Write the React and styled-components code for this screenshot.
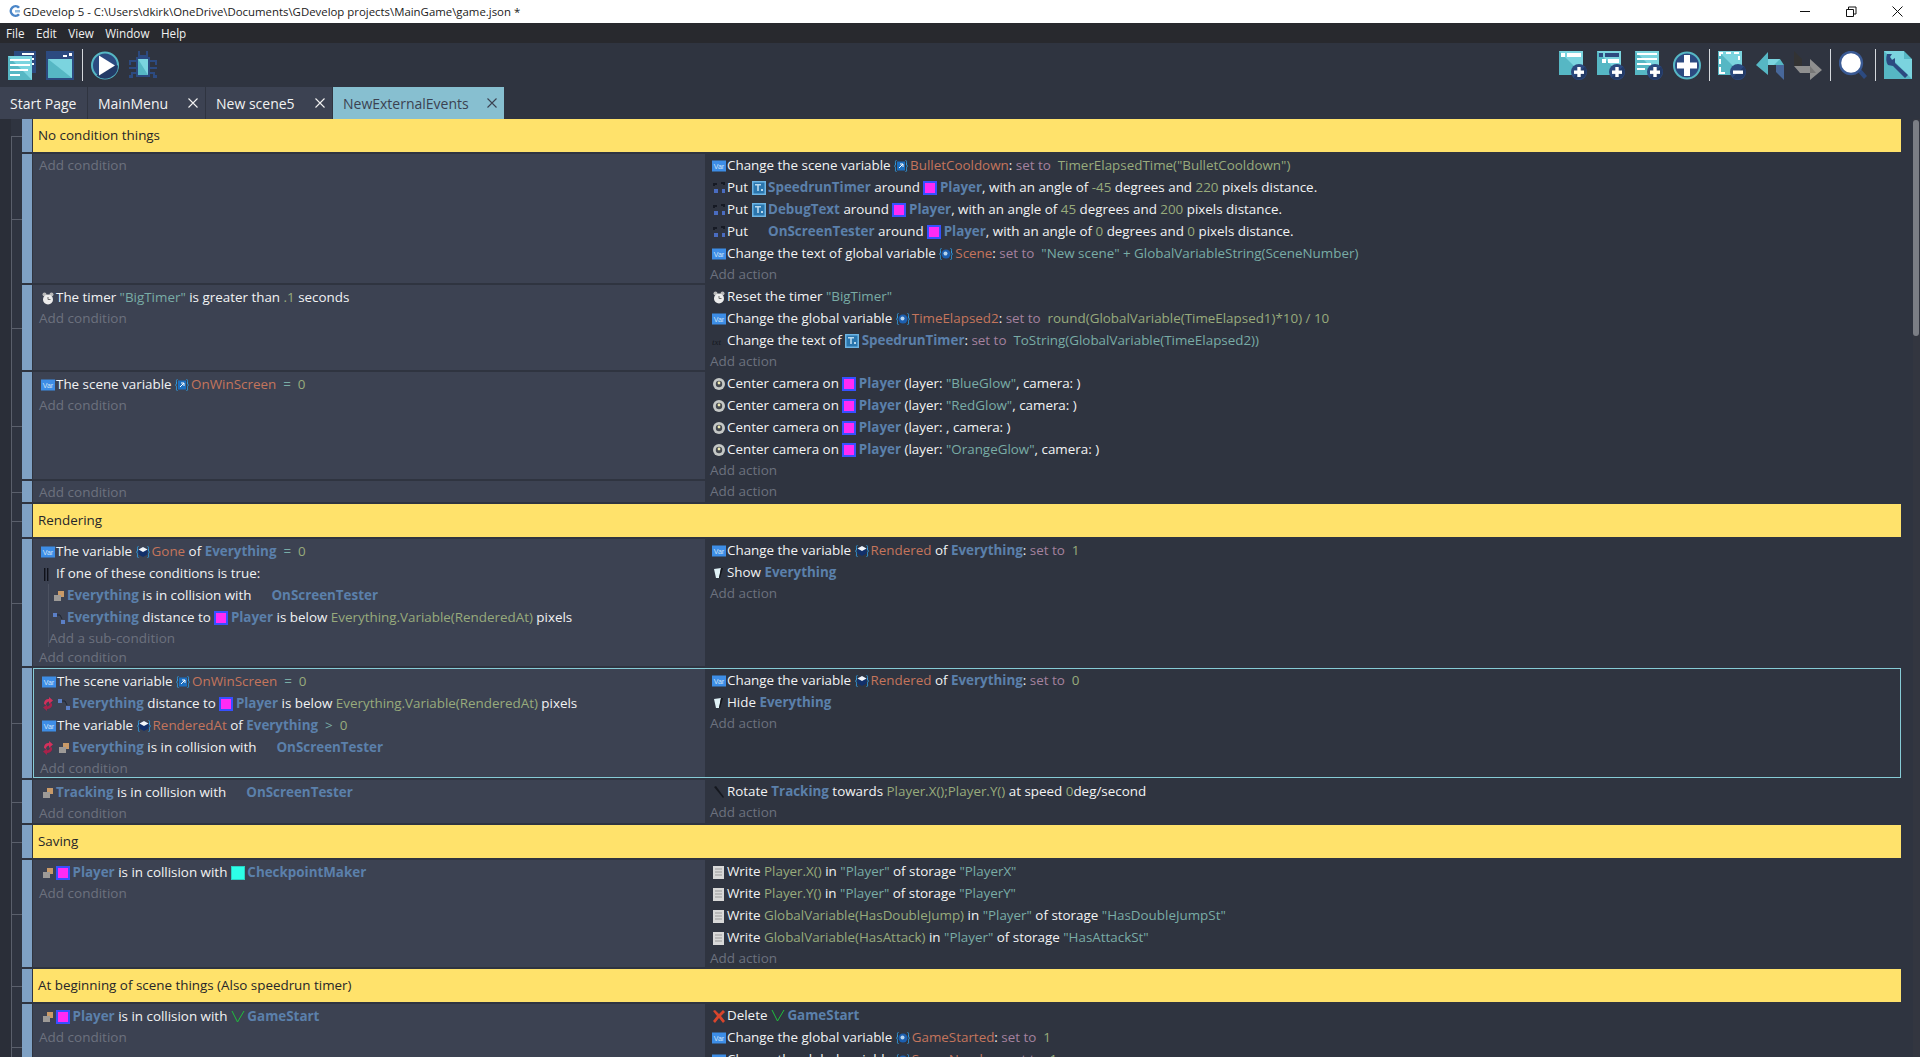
import React from 'react';
import styled, { createGlobalStyle } from 'styled-components';

const GlobalStyle = createGlobalStyle`
  html, body { margin: 0; padding: 0; height: 100%; overflow: hidden; background: #2f3440; }
  body { font-family: "Open Sans", "Noto Sans", "Liberation Sans", sans-serif; }
`;

const colors = {
  obj: '#5b80ab',
  varName: '#c4755c',
  num: '#98ab7c',
  str: '#79aca6',
  expr: '#98ab7c',
  op: '#a5829f',
  cmp: '#79aca6',
};

const Shell = styled.div`
  width: 1920px;
  height: 1057px;
  display: flex;
  flex-direction: column;
  overflow: hidden;
  background: #2f3440;
`;

const TitleBar = styled.div`
  height: 23px;
  flex: none;
  background: #fff;
  display: flex;
  align-items: center;
  padding-left: 7px;
  color: #1a1a1a;
  font-size: 11.4px;
`;

const TitleText = styled.span`
  margin-left: 1px;
  white-space: pre;
`;

const WindowButtons = styled.div`
  margin-left: auto;
  display: flex;
  height: 100%;
`;

const WindowButton = styled.div`
  width: 46px;
  display: flex;
  align-items: center;
  justify-content: center;
`;

const MenuBar = styled.div`
  height: 20px;
  flex: none;
  background: #28292e;
  display: flex;
  align-items: center;
  padding-left: 6px;
  gap: 11.5px;
  color: #f1f1f1;
  font-size: 11.7px;
`;

const Toolbar = styled.div`
  height: 44px;
  flex: none;
  display: flex;
  align-items: center;
  padding: 0 8px;
  gap: 10px;
`;

const ToolIcon = styled.svg`
  width: 28px;
  height: 29px;
  flex: none;
`;

const ToolSep = styled.div`
  width: 1px;
  height: 32px;
  margin: 0 -2px;
  background: #d5d8dd;
`;

const ToolSpacer = styled.div`
  flex: 1;
`;

const TabBar = styled.div`
  height: 32px;
  flex: none;
  display: flex;
  gap: 1px;
`;

const Tab = styled.div`
  display: flex;
  align-items: center;
  justify-content: space-between;
  width: ${p => p.$width}px;
  padding: 0 7px 0 10px;
  box-sizing: border-box;
  background: ${p => (p.$active ? '#87bfd0' : '#3c4252')};
  color: ${p => (p.$active ? '#3b4251' : '#f2f2f2')};
  font-size: 14px;
  white-space: pre;
`;

const CloseMark = styled.svg`
  width: 10px;
  height: 10px;
  flex: none;
`;

const EventsArea = styled.div`
  flex: 1;
  display: flex;
  min-height: 0;
  overflow: hidden;
`;

const EventList = styled.div`
  width: 1901px;
  flex: none;
  padding-left: 22px;
  box-sizing: border-box;
  background:
    linear-gradient(#5a5f6b, #5a5f6b) 11px 18px / 1px 100% no-repeat,
    linear-gradient(#2a2e38, #2a2e38) 0 0 / 11px 100% no-repeat;
`;

const Scrollbar = styled.div`
  width: 7px;
  flex: none;
  margin-left: 12px;
  background: #333640;
`;

const ScrollThumb = styled.div`
  width: 6px;
  height: 216px;
  margin-top: 1px;
  border-radius: 3px;
  background: #7b7e85;
`;

const EventWrap = styled.div`
  position: relative;
  display: flex;
  margin-bottom: 2px;

  &::before {
    content: '';
    position: absolute;
    left: -11px;
    top: 50%;
    width: 11px;
    height: 1px;
    background: #5a5f6b;
  }
`;

const Handle = styled.div`
  width: 10px;
  flex: none;
  margin-right: 1px;
  background: #7fa1c4;
`;

const Comment = styled.div`
  flex: 1;
  height: 33px;
  line-height: 33px;
  padding-left: 5px;
  background: #ffe26b;
  color: #26262a;
  font-size: 13.4px;
`;

const EventBody = styled.div`
  flex: 1;
  display: grid;
  grid-template-columns: ${p => (p.$selected ? '671px' : '672px')} 1fr;
  border: ${p => (p.$selected ? '1px solid #86cbd6' : 'none')};
`;

const Conditions = styled.div`
  background: #3c4252;
  padding: 1px 0 ${p => (p.$tight ? 0 : 1)}px 6px;
`;

const Actions = styled.div`
  background: #2f3440;
  padding-left: 5px;
  overflow: hidden;
`;

const Line = styled.div`
  height: 22px;
  line-height: 22px;
  padding-left: ${p => p.$indent ?? 2}px;
  color: #f2f3f4;
  font-size: 13.4px;
  white-space: pre;
`;

const SubList = styled.div`
  margin-left: 9px;
  border-left: 1px solid #4c5261;
`;

const AddLink = styled.div`
  height: 19px;
  line-height: 21px;
  color: #6c717e;
  font-size: 13.5px;
  white-space: pre;
`;

const Tok = styled.span`
  color: ${p => colors[p.$k]};
  font-weight: ${p => (p.$k === 'obj' ? 700 : 400)};
`;

const Glyph = styled.svg`
  display: inline-block;
  width: ${p => p.$w ?? 14}px;
  height: 14px;
  vertical-align: -3px;
  margin-right: ${p => p.$gap ?? 1}px;
`;

const navy = '#2c4a80';
const deep = '#233a66';
const teal = '#56b7c4';
const light = '#7bd4df';

const Panel = ({ w = 24 }) => (
  <>
    <rect x="0" y="0" width={w} height={w} fill={teal} />
    <path d={`M0 0H${w}V${w}Z`} fill={light} />
  </>
);

const Badge = ({ minus }) => (
  <>
    <circle cx="20" cy="21" r="8" fill={navy} />
    <path d="M14.5 26.5A8 8 0 0 0 26 15.5Z" fill={deep} />
    <rect x="15" y="19.5" width="10" height="3.4" fill="#fff" />
    {!minus && <rect x="18.3" y="16" width="3.4" height="10" fill="#fff" />}
  </>
);

const toolArt = {
  project: (
    <>
      <rect x="6" y="0" width="22" height="22" fill={navy} />
      <path d="M14 2h12v2H14zM18 7h8v2h-8zM20 12h6v2h-6z" fill="#fff" />
      <rect x="0" y="5" width="24" height="24" fill={teal} />
      <path d="M0 5H24V29Z" fill={light} />
      <path d="M2 8h20v2H2zM2 13h20v2H2zM2 18h18v2H2zM2 23h10v2H2z" fill="#fff" />
    </>
  ),
  scene: (
    <>
      <rect x="0" y="0" width="28" height="29" fill={navy} />
      <rect x="2" y="8" width="24" height="19" fill={teal} />
      <path d="M2 8H26V27Z" fill={light} />
      <path d="M17 4h4v2h-4zM23 2h3v3h-3z" fill="#fff" />
    </>
  ),
  play: (
    <>
      <circle cx="14" cy="14.5" r="13" fill={navy} stroke={teal} strokeWidth="2" />
      <path d="M5.5 24.5A13 13 0 0 0 27 14.5L20 14Z" fill={deep} />
      <path d="M8 4.5L24 14.5L8 24.5Z" fill="#fff" />
    </>
  ),
  bug: (
    <>
      <path
        d="M9 0h2v5H9zM17 0h2v5h-2zM0 9h8v2H2v3H0zM20 9h8v5h-2v-3h-6zM0 16h8v2H0zM20 16h8v2h-8zM0 24h2v-3h6v2H4v4H0zM20 21h6v3h2v3h-4v-4h-4z"
        fill={navy}
      />
      <path d="M9 4h10v2h2v20H7V6h2z" fill={navy} />
      <rect x="9" y="8" width="10" height="16" fill={teal} />
      <path d="M9 8H19V24Z" fill={light} />
    </>
  ),
  addScene: (
    <>
      <Panel />
      <path d="M2 2h4v4H2zM8 2h14v4H8z" fill="#fff" />
      <Badge />
    </>
  ),
  addGroup: (
    <>
      <Panel />
      <path d="M2 2h4v4H2z" fill={navy} />
      <path d="M8 2h14v4H8z" fill={navy} />
      <path d="M5 8h4v4H5zM11 8h11v4H11z" fill="#fff" />
      <Badge />
    </>
  ),
  addLines: (
    <>
      <Panel />
      <path d="M2 2h20v2H2zM2 7h20v2H2zM2 12h14v2H2zM2 17h8v2H2z" fill="#fff" />
      <Badge />
    </>
  ),
  addCircle: (
    <>
      <circle cx="14" cy="14.5" r="13" fill={navy} stroke={teal} strokeWidth="2" />
      <path d="M11 4h6v7.5h7v6h-7V25h-6v-7.5H4v-6h7z" fill="#fff" />
    </>
  ),
  removeLines: (
    <>
      <Panel />
      <path
        d="M1 1h4v2H3v2H1zM8 1h5v2H8zM16 1h5v2h-5zM1 8h2v5H1zM1 16h2v5h4v2H1zM20 5h2v4h-2z"
        fill="#fff"
      />
      <Badge minus />
    </>
  ),
  undo: (
    <>
      <path d="M0 14L12 1V8H24L28 14H12V24Z" fill={teal} />
      <path d="M12 8H24L18 14H12Z" fill={light} />
      <path d="M20 14H28V29L20 21Z" fill="#47679a" />
    </>
  ),
  redo: (
    <>
      <path d="M0 0L8 8V15H0Z" fill="#333" />
      <path d="M0 15H16V8L28 19L16 29V22H6Z" fill="#8f8f8f" />
      <path d="M16 15L22 22H16Z" fill="#777" />
    </>
  ),
  search: (
    <>
      <path d="M18 20L21 17L28 25L25 28Z" fill={navy} />
      <circle cx="12" cy="12" r="11" fill="#fff" stroke="#3a5a94" strokeWidth="2.4" />
    </>
  ),
  wrench: (
    <>
      <path d="M0 0H20L28 8V28H0Z" fill={teal} />
      <path d="M0 0H20V8H28V28Z" fill={light} />
      <path
        d="M3 3L8 3L6 6L8 9L11 7L11 12L24 24L21 27L9 15L4 14Q1 10 3 3Z"
        fill={navy}
      />
    </>
  ),
};

const Tool = ({ art }) => <ToolIcon viewBox="0 0 28 29">{toolArt[art]}</ToolIcon>;

const icons = {
  var: (
    <>
      <rect x="0" y="1.5" width="14" height="11" fill="#3d8de6" />
      <text x="1.8" y="10" fontSize="7" fontFamily="Liberation Sans, sans-serif" fill="#cfe3f7">
        Var
      </text>
    </>
  ),
  clock: (
    <>
      <circle cx="3.5" cy="3.5" r="2" fill="#b9b9b9" />
      <circle cx="10.5" cy="3.5" r="2" fill="#b9b9b9" />
      <circle cx="7" cy="8.500" r="5" fill="#ececec" />
      <path d="M7 6v2.500h2.500" stroke="#6a6a6a" fill="none" />
    </>
  ),
  put: (
    <>
      <path d="M1 2h4v2H3v1H1zM9 1h4v3h-2V3H9z" fill="#161a24" />
      <path d="M2 8h4v4H2zM10 8h3v4h-3z" fill="#4a6cc0" />
    </>
  ),
  txt: (
    <text x="0" y="11" fontSize="9" fontStyle="italic" fontFamily="Liberation Serif, serif" fill="#15181f">
      txt
    </text>
  ),
  camera: (
    <>
      <circle cx="7" cy="7" r="6" fill="#c5c8c6" />
      <circle cx="7" cy="7" r="3.2" fill="#44484f" />
      <circle cx="7" cy="6" r="1.4" fill="#ece7b0" />
    </>
  ),
  show: (
    <>
      <path d="M2 3L9 2L7 12H4Z" fill="#dff0f5" />
      <path d="M9 2L11 2L8 12H7Z" fill="#14161c" />
    </>
  ),
  collide: (
    <>
      <rect x="6" y="2" width="6" height="6" fill="#c99a68" />
      <rect x="2" y="6" width="7" height="6" fill="#9d9a97" />
    </>
  ),
  distance: (
    <>
      <rect x="1" y="2" width="4" height="4" fill="#5b7fc6" />
      <rect x="9" y="9" width="4" height="4" fill="#5b7fc6" />
      <path d="M5 4h3l2 4" stroke="#1f2634" fill="none" strokeWidth="1" />
    </>
  ),
  invert: (
    <>
      <path d="M2 7A4.500 4.500 0 0 1 7 2V0L11 3.500L7 7V4.500Q4 5 4 8Z" fill="#d2315c" />
      <path d="M10 6.500A4.500 4.500 0 0 1 5 12V14L1 10.500L5 7.500V9.500Q8 9 8 6Z" fill="#a8224a" />
    </>
  ),
  storage: (
    <>
      <rect x="1" y="1" width="11" height="13" fill="#d8d8d8" />
      <path d="M3 4h7M3 7h7M3 10h7" stroke="#9a9a9a" />
    </>
  ),
  remove: <path d="M1 2L3 1L7 5L11 1L13 3L9 7L13 12L11 14L7 9L3 14L1 12L5 7Z" fill="#d8452c" />,
  or: <path d="M3 1h1.4v13H3zM6 1h1.4v13H6z" fill="#10121a" />,
  rotate: <path d="M2 2L4 1L12 12L11 13Z" fill="#15181f" />,
  player: (
    <>
      <rect x="0" y="0" width="14" height="14" fill="#3650ff" />
      <rect x="2" y="2" width="10" height="10" fill="#ff2bf5" />
    </>
  ),
  checkpoint: (
    <>
      <rect x="0" y="0" width="14" height="14" fill="#2ad2c4" />
      <rect x="1" y="1" width="12" height="12" fill="#2dffe8" />
    </>
  ),
  start: <path d="M1 1L6.5 12L13 1" stroke="#1fbf3c" fill="none" strokeWidth="1" />,
  text: (
    <>
      <rect x="0" y="0" width="14" height="14" fill="#6cb4e4" />
      <rect x="1.500" y="1.500" width="11" height="11" fill="#2a75ad" />
      <path d="M3 3h6v1.500H6.800V10H5.200V4.500H3zM9 8h2v2H9z" fill="#b7d8ee" />
    </>
  ),
  blank: null,
};

const Icon = ({ name, gap, w }) => (
  <Glyph viewBox={`0 0 ${w ?? 14} 14`} $gap={gap} $w={w}>
    {icons[name]}
  </Glyph>
);

const scopeArt = {
  scene: (
    <>
      <rect x="3" y="2.500" width="8" height="9" fill="#1c6fc0" />
      <path d="M5 9L9 5M6 5h3v3" stroke="#fff" fill="none" />
    </>
  ),
  global: (
    <>
      <circle cx="7" cy="7" r="4.500" fill="#1c5fb0" />
      <circle cx="6.500" cy="6.500" r="2" fill="#b7d4ee" />
    </>
  ),
  object: (
    <>
      <path d="M7 2L11.500 4.500V9.500L7 12L2.500 9.500V4.500Z" fill="#12306b" />
      <path d="M7 2L11.500 4.500L7 7L2.500 4.500Z" fill="#f2f6fa" />
    </>
  ),
};

const Var = ({ scope, children }) => (
  <>
    <Glyph viewBox="0 0 14 14" $gap={2}>
      <path
        d="M2.500 1.500C1 1.500 1.500 3 1.500 5S1 6.500 0.400 7C1 7.500 1.500 7.500 1.500 9.500s-.5 3 1 3M11.500 1.500c1.500 0 1 1.500 1 3.500s.5 1.500 1.100 2c-.6.500-1.100.500-1.100 2.500s.5 3-1 3"
        stroke="#2f9be0"
        fill="none"
      />
      {scopeArt[scope]}
    </Glyph>
    <Tok $k="varName">{children}</Tok>
  </>
);

const Obj = ({ icon, children }) => (
  <>
    {icon && <Icon name={icon} gap={2.5} />}
    <Tok $k="obj">{children}</Tok>
  </>
);

const Player = () => <Obj icon="player">Player</Obj>;
const SetTo = () => <Tok $k="op">set to</Tok>;
const Num = ({ children }) => <Tok $k="num">{children}</Tok>;
const Str = ({ children }) => <Tok $k="str">{children}</Tok>;
const Expr = ({ children }) => <Tok $k="expr">{children}</Tok>;
const Cmp = ({ children }) => <Tok $k="cmp">{children}</Tok>;

const CommentRow = ({ children }) => (
  <EventWrap>
    <Handle />
    <Comment>{children}</Comment>
  </EventWrap>
);

const Event = ({ when, then, selected, tight }) => (
  <EventWrap>
    <Handle />
    <EventBody $selected={selected}>
      <Conditions $tight={tight}>
        {when}
        <AddLink>Add condition</AddLink>
      </Conditions>
      <Actions>
        {then}
        <AddLink>Add action</AddLink>
      </Actions>
    </EventBody>
  </EventWrap>
);

const CenterCamera = ({ layer }) => (
  <Line>
    <Icon name="camera" />
    {'Center camera on '}
    <Player />
    {' (layer: '}
    {layer && <Str>{layer}</Str>}
    {', camera: )'}
  </Line>
);

const PutAround = ({ icon, name, angle, dist }) => (
  <Line>
    <Icon name="put" />
    {'Put '}
    <Obj icon={icon}>{name}</Obj>
    {' around '}
    <Player />
    {', with an angle of '}
    <Num>{angle}</Num>
    {' degrees and '}
    <Num>{dist}</Num>
    {' pixels distance.'}
  </Line>
);

const WriteStorage = ({ value, target }) => (
  <Line>
    <Icon name="storage" />
    {'Write '}
    <Expr>{value}</Expr>
    {' in '}
    <Str>"Player"</Str>
    {' of storage '}
    <Str>{target}</Str>
  </Line>
);

const Collision = ({ name, invert, indent }) => (
  <Line $indent={indent}>
    {invert && <Icon name="invert" gap={3} w={12} />}
    <Icon name="collide" />
    <Obj>{name}</Obj>
    {' is in collision with '}
    <Obj icon="blank">OnScreenTester</Obj>
  </Line>
);

const Distance = ({ invert, indent }) => (
  <Line $indent={indent}>
    {invert && <Icon name="invert" gap={3} w={12} />}
    <Icon name="distance" />
    <Obj>Everything</Obj>
    {' distance to '}
    <Player />
    {' is below '}
    <Expr>Everything.Variable(RenderedAt)</Expr>
    {' pixels'}
  </Line>
);

const OnWinScreen = () => (
  <Line>
    <Icon name="var" />
    {'The scene variable '}
    <Var scope="scene">OnWinScreen</Var>
    {'  '}
    <Cmp>=</Cmp>
    {'  '}
    <Num>0</Num>
  </Line>
);

const ChangeRendered = ({ value }) => (
  <Line>
    <Icon name="var" />
    {'Change the variable '}
    <Var scope="object">Rendered</Var>
    {' of '}
    <Obj>Everything</Obj>
    {': '}
    <SetTo />
    {'  '}
    <Num>{value}</Num>
  </Line>
);

const Toggle = ({ label }) => (
  <Line>
    <Icon name="show" />
    {label + ' '}
    <Obj>Everything</Obj>
  </Line>
);

export default function App() {
  return (
    <Shell>
      <GlobalStyle />
      <TitleBar>
        <svg width="15" height="15" viewBox="0 0 15 15">
          <path d="M13 3A6 6 0 1 0 13 11L11 9.500A3.500 3.500 0 1 1 11 4.500Z" fill="#4a86c8" />
          <path d="M13 6H8V8.500H13Z" fill="#8fb9de" />
        </svg>
        <TitleText>{'GDevelop 5 - C:\\Users\\dkirk\\OneDrive\\Documents\\GDevelop projects\\MainGame\\game.json *'}</TitleText>
        <WindowButtons>
          <WindowButton>
            <svg width="11" height="11" viewBox="0 0 11 11">
              <path d="M0 5.500H10" stroke="#111" />
            </svg>
          </WindowButton>
          <WindowButton>
            <svg width="11" height="11" viewBox="0 0 11 11">
              <path d="M.5 3.500h7v7h-7zM2.500 3.500v-2.500h7.500v7H7.500" stroke="#111" fill="none" />
            </svg>
          </WindowButton>
          <WindowButton>
            <svg width="11" height="11" viewBox="0 0 11 11">
              <path d="M.5.500L10.500 10.500M10.500.500L.5 10.500" stroke="#111" />
            </svg>
          </WindowButton>
        </WindowButtons>
      </TitleBar>

      <MenuBar>
        <span>File</span>
        <span>Edit</span>
        <span>View</span>
        <span>Window</span>
        <span>Help</span>
      </MenuBar>

      <Toolbar>
        <Tool art="project" />
        <Tool art="scene" />
        <ToolSep />
        <Tool art="play" />
        <Tool art="bug" />
        <ToolSpacer />
        <Tool art="addScene" />
        <Tool art="addGroup" />
        <Tool art="addLines" />
        <Tool art="addCircle" />
        <ToolSep />
        <Tool art="removeLines" />
        <Tool art="undo" />
        <Tool art="redo" />
        <ToolSep />
        <Tool art="search" />
        <ToolSep />
        <Tool art="wrench" />
      </Toolbar>

      <TabBar>
        <Tab $width={87}>Start Page</Tab>
        {[
          ['MainMenu', 117],
          ['New scene5', 126],
          ['NewExternalEvents', 171],
        ].map(([label, width], index) => (
          <Tab key={label} $width={width} $active={index === 2}>
            {label}
            <CloseMark viewBox="0 0 10 10">
              <path
                d="M.5.500L9.500 9.500M9.500.500L.5 9.500"
                stroke={index === 2 ? '#3b4251' : '#f2f2f2'}
                strokeWidth="1.100"
              />
            </CloseMark>
          </Tab>
        ))}
      </TabBar>

      <EventsArea>
        <EventList>
          <CommentRow>No condition things</CommentRow>

          <Event
            then={
              <>
                <Line>
                  <Icon name="var" />
                  {'Change the scene variable '}
                  <Var scope="scene">BulletCooldown</Var>
                  {': '}
                  <SetTo />
                  {'  '}
                  <Expr>TimerElapsedTime("BulletCooldown")</Expr>
                </Line>
                <PutAround icon="text" name="SpeedrunTimer" angle="-45" dist="220" />
                <PutAround icon="text" name="DebugText" angle="45" dist="200" />
                <PutAround icon="blank" name="OnScreenTester" angle="0" dist="0" />
                <Line>
                  <Icon name="var" />
                  {'Change the text of global variable '}
                  <Var scope="global">Scene</Var>
                  {': '}
                  <SetTo />
                  {'  '}
                  <Str>"New scene" + GlobalVariableString(SceneNumber)</Str>
                </Line>
              </>
            }
          />

          <Event
            when={
              <Line>
                <Icon name="clock" />
                {'The timer '}
                <Str>"BigTimer"</Str>
                {' is greater than '}
                <Num>.1</Num>
                {' seconds'}
              </Line>
            }
            then={
              <>
                <Line>
                  <Icon name="clock" />
                  {'Reset the timer '}
                  <Str>"BigTimer"</Str>
                </Line>
                <Line>
                  <Icon name="var" />
                  {'Change the global variable '}
                  <Var scope="global">TimeElapsed2</Var>
                  {': '}
                  <SetTo />
                  {'  '}
                  <Expr>round(GlobalVariable(TimeElapsed1)*10) / 10</Expr>
                </Line>
                <Line>
                  <Icon name="txt" />
                  {'Change the text of '}
                  <Obj icon="text">SpeedrunTimer</Obj>
                  {': '}
                  <SetTo />
                  {'  '}
                  <Str>ToString(GlobalVariable(TimeElapsed2))</Str>
                </Line>
              </>
            }
          />

          <Event
            when={<OnWinScreen />}
            then={
              <>
                <CenterCamera layer={'"BlueGlow"'} />
                <CenterCamera layer={'"RedGlow"'} />
                <CenterCamera />
                <CenterCamera layer={'"OrangeGlow"'} />
              </>
            }
          />

          <Event />

          <CommentRow>Rendering</CommentRow>

          <Event
            tight
            when={
              <>
                <Line>
                  <Icon name="var" />
                  {'The variable '}
                  <Var scope="object">Gone</Var>
                  {' of '}
                  <Obj>Everything</Obj>
                  {'  '}
                  <Cmp>=</Cmp>
                  {'  '}
                  <Num>0</Num>
                </Line>
                <Line>
                  <Icon name="or" />
                  If one of these conditions is true:
                </Line>
                <SubList>
                  <Collision name="Everything" indent={3} />
                  <Distance indent={3} />
                  <AddLink>Add a sub-condition</AddLink>
                </SubList>
              </>
            }
            then={
              <>
                <ChangeRendered value="1" />
                <Toggle label="Show" />
              </>
            }
          />

          <Event
            selected
            tight
            when={
              <>
                <OnWinScreen />
                <Distance invert />
                <Line>
                  <Icon name="var" />
                  {'The variable '}
                  <Var scope="object">RenderedAt</Var>
                  {' of '}
                  <Obj>Everything</Obj>
                  {'  '}
                  <Cmp>&gt;</Cmp>
                  {'  '}
                  <Num>0</Num>
                </Line>
                <Collision name="Everything" invert />
              </>
            }
            then={
              <>
                <ChangeRendered value="0" />
                <Toggle label="Hide" />
              </>
            }
          />

          <Event
            when={<Collision name="Tracking" />}
            then={
              <Line>
                <Icon name="rotate" />
                {'Rotate '}
                <Obj>Tracking</Obj>
                {' towards '}
                <Expr>Player.X();Player.Y()</Expr>
                {' at speed '}
                <Num>0</Num>
                deg/second
              </Line>
            }
          />

          <CommentRow>Saving</CommentRow>

          <Event
            when={
              <Line>
                <Icon name="collide" />
                <Player />
                {' is in collision with '}
                <Obj icon="checkpoint">CheckpointMaker</Obj>
              </Line>
            }
            then={
              <>
                <WriteStorage value="Player.X()" target={'"PlayerX"'} />
                <WriteStorage value="Player.Y()" target={'"PlayerY"'} />
                <WriteStorage value="GlobalVariable(HasDoubleJump)" target={'"HasDoubleJumpSt"'} />
                <WriteStorage value="GlobalVariable(HasAttack)" target={'"HasAttackSt"'} />
              </>
            }
          />

          <CommentRow>At beginning of scene things (Also speedrun timer)</CommentRow>

          <Event
            when={
              <Line>
                <Icon name="collide" />
                <Player />
                {' is in collision with '}
                <Obj icon="start">GameStart</Obj>
              </Line>
            }
            then={
              <>
                <Line>
                  <Icon name="remove" />
                  {'Delete '}
                  <Obj icon="start">GameStart</Obj>
                </Line>
                <Line>
                  <Icon name="var" />
                  {'Change the global variable '}
                  <Var scope="global">GameStarted</Var>
                  {': '}
                  <SetTo />
                  {'  '}
                  <Num>1</Num>
                </Line>
                <Line>
                  <Icon name="var" />
                  {'Change the global variable '}
                  <Var scope="global">SceneNumber</Var>
                  {': '}
                  <SetTo />
                  {'  '}
                  <Num>1</Num>
                </Line>
              </>
            }
          />
        </EventList>
        <Scrollbar>
          <ScrollThumb />
        </Scrollbar>
      </EventsArea>
    </Shell>
  );
}
